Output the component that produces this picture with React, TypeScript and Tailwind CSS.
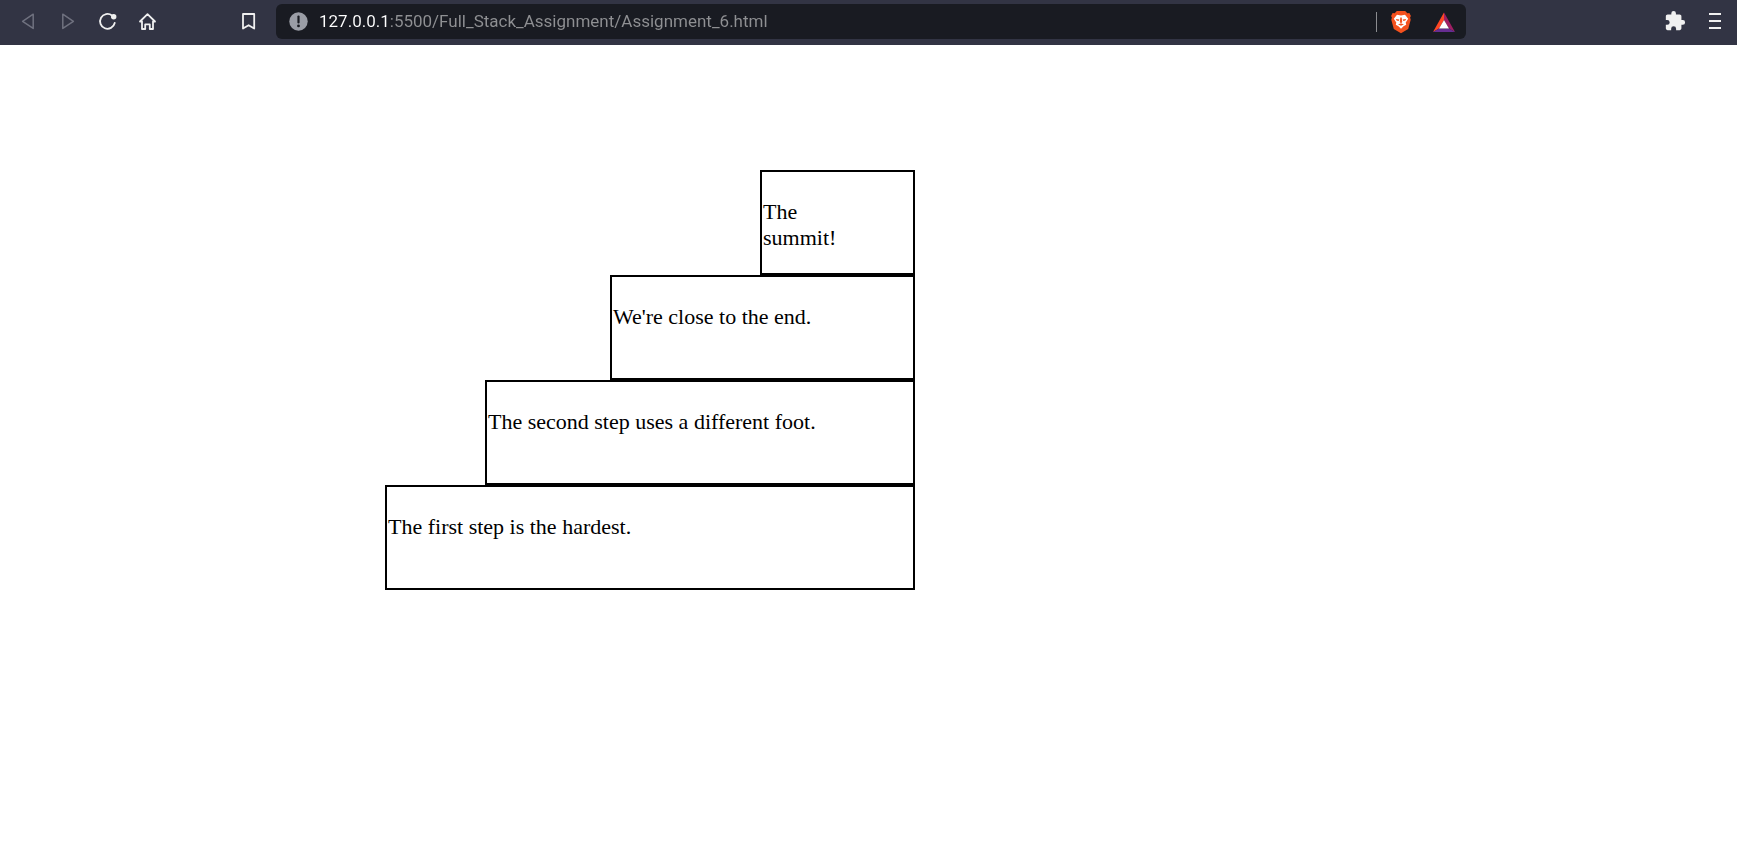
import React from "react";

const steps = [
  { width: "w-[155px]", lines: ["The", "summit!"] },
  { width: "w-[305px]", lines: ["We're close to the end."] },
  { width: "w-[430px]", lines: ["The second step uses a different foot."] },
  { width: "w-[530px]", lines: ["The first step is the hardest."] },
];

function ToolButton({ label, disabled, children }: { label: string; disabled?: boolean; children: React.ReactNode }) {
  return (
    <button
      type="button"
      aria-label={label}
      disabled={disabled}
      className="flex h-[25px] w-6 shrink-0 items-start justify-center text-[#f0f0f0] disabled:text-[#6f717f]"
    >
      {children}
    </button>
  );
}

function Toolbar() {
  return (
    <header className="flex h-[45px] items-center bg-[#323444] pb-[2px]">
      <nav aria-label="Navigation" className="flex shrink-0 gap-4 pl-4">
        <ToolButton label="Back" disabled>
          <svg width="24" height="24" viewBox="0 0 24 24" fill="none" stroke="currentColor" strokeWidth="1.5" strokeLinejoin="round">
            <path d="M17.200 5.200v14.200L6.600 12.300z" />
          </svg>
        </ToolButton>
        <ToolButton label="Forward" disabled>
          <svg width="24" height="24" viewBox="0 0 24 24" fill="none" stroke="currentColor" strokeWidth="1.5" strokeLinejoin="round">
            <path d="M6.800 5.200v14.200l10.600-7.100z" />
          </svg>
        </ToolButton>
        <ToolButton label="Reload">
          <svg width="24" height="24" viewBox="0 0 24 24" fill="none" stroke="currentColor" strokeWidth="1.8" strokeLinecap="round">
            <path d="M18.700 14A7.400 7.400 0 1 1 16 6.500" />
            <circle cx="17.700" cy="7.700" r="2.700" fill="currentColor" stroke="none" />
          </svg>
        </ToolButton>
        <ToolButton label="Home">
          <svg width="24" height="24" viewBox="0 0 24 24" fill="none" stroke="currentColor" strokeWidth="1.800" strokeLinecap="round" strokeLinejoin="round">
            <path d="M4 12.500 11.500 5.200l7.500 7.300h-2V20h-3.200v-4.600H9.200V20H6v-7.500z" />
          </svg>
        </ToolButton>
      </nav>
      <div className="flex min-w-0 flex-1 items-center pl-[76px]">
        <ToolButton label="Bookmark this page">
          <svg width="24" height="24" viewBox="0 0 24 24" fill="none" stroke="currentColor" strokeWidth="1.800" strokeLinejoin="round">
            <path d="M7 5h11.200v14.600l-5.600-3.400L7 19.600z" />
          </svg>
        </ToolButton>
        <div className="ml-4 flex h-[35px] min-w-0 flex-1 items-center rounded-md bg-[#191b22] pr-[10px] pl-[13px]">
          <button type="button" aria-label="Site information" className="shrink-0">
            <svg width="19" height="19" viewBox="0 0 19 19">
              <circle cx="9.500" cy="9.500" r="9.200" fill="#9a9da6" />
              <path d="M9.500 4.600v5.800" stroke="#191b22" strokeWidth="2.200" strokeLinecap="round" />
              <circle cx="9.500" cy="13.900" r="1.400" fill="#191b22" />
            </svg>
          </button>
          <input
            aria-label="Address"
            type="text"
            spellCheck={false}
            defaultValue="127.0.0.1:5500/Full_Stack_Assignment/Assignment_6.html"
            className="ml-[11px] h-6 min-w-0 flex-1 bg-linear-to-r from-white from-[68px] to-[#8f9093] to-[68px] bg-clip-text font-[Roboto,sans-serif] text-[17px] text-transparent caret-white outline-none"
          />
          <span className="h-5 w-px shrink-0 bg-[#8b8c90]" />
          <button type="button" aria-label="Brave Shields" className="ml-3 shrink-0">
            <svg width="24" height="24" viewBox="0 0 24 24">
              <path d="M7.800 1h8.400l2.100 2.200 2.100-.2 1.500 3-.8 1.600.6 2.200-2.500 9.300L12 23.300l-7.200-4.200L2.300 9.800l.6-2.200L2.100 6l1.500-3 2.100.2z" fill="#f4511e" />
              <path d="M8 4.800l4 .8 4-.8 3.200 4-2.500 3.700.5 2.300-2.700 1.500L12 18.800l-2.500-2.500-2.700-1.500.5-2.300L4.800 8.800z" fill="#fff" />
              <path d="M6.800 9l3.600.6-.8 1.500-2-.5zM17.200 9l-3.600.6.8 1.500 2-.5zM11.300 7.500h1.400l.5 4.600-1.200 1.400-1.200-1.400zM9 14.200l3-.7 3 .7-3 1.500z" fill="#f4511e" />
            </svg>
          </button>
          <button type="button" aria-label="Brave Rewards" className="ml-[19px] shrink-0">
            <svg width="24" height="24" viewBox="0 0 24 24">
              <path d="M12 2.500 1 22l6-3.500 5-8.500z" fill="#ff4724" />
              <path d="M12 2.500V10l5 8.500 6 3.500z" fill="#9e1f63" />
              <path d="M1 22h22l-6-3.500H7z" fill="#662d91" />
              <path d="M12 10l-5 8.500h10z" fill="#fff" />
            </svg>
          </button>
        </div>
      </div>
      <div className="ml-[197px] flex shrink-0 gap-4 pr-[10px]">
        <ToolButton label="Extensions">
          <svg width="22" height="24" viewBox="0 0 24 24" fill="currentColor">
            <path d="M20.500 11H19V7c0-1.100-.9-2-2-2h-4V3.500a2.500 2.500 0 0 0-5 0V5H4c-1.100 0-2 .9-2 2v3.800h1.500a2.700 2.700 0 0 1 0 5.400H2V20c0 1.100.9 2 2 2h3.800v-1.500a2.700 2.700 0 0 1 5.400 0V22H17c1.100 0 2-.9 2-2v-4h1.500a2.500 2.500 0 0 0 0-5z" />
          </svg>
        </ToolButton>
        <ToolButton label="Menu">
          <svg width="24" height="24" viewBox="0 0 24 24" fill="currentColor">
            <path d="M6 4h12v2H6zM6 11h12v2H6zM6 18h12v2H6z" />
          </svg>
        </ToolButton>
      </div>
    </header>
  );
}

export default function App() {
  return (
    <div className="min-h-screen bg-white">
      <Toolbar />
      <main className="flex max-w-[915px] flex-col items-end pt-[125px] font-['Liberation_Serif',serif] text-[22px] leading-[26px] text-black">
        {steps.map((step) => (
          <section key={step.width} className={`h-[105px] border-2 border-black pt-[27px] pl-px ${step.width}`}>
            <p>
              {step.lines.map((line) => (
                <span key={line} className="block">
                  {line}
                </span>
              ))}
            </p>
          </section>
        ))}
      </main>
    </div>
  );
}
